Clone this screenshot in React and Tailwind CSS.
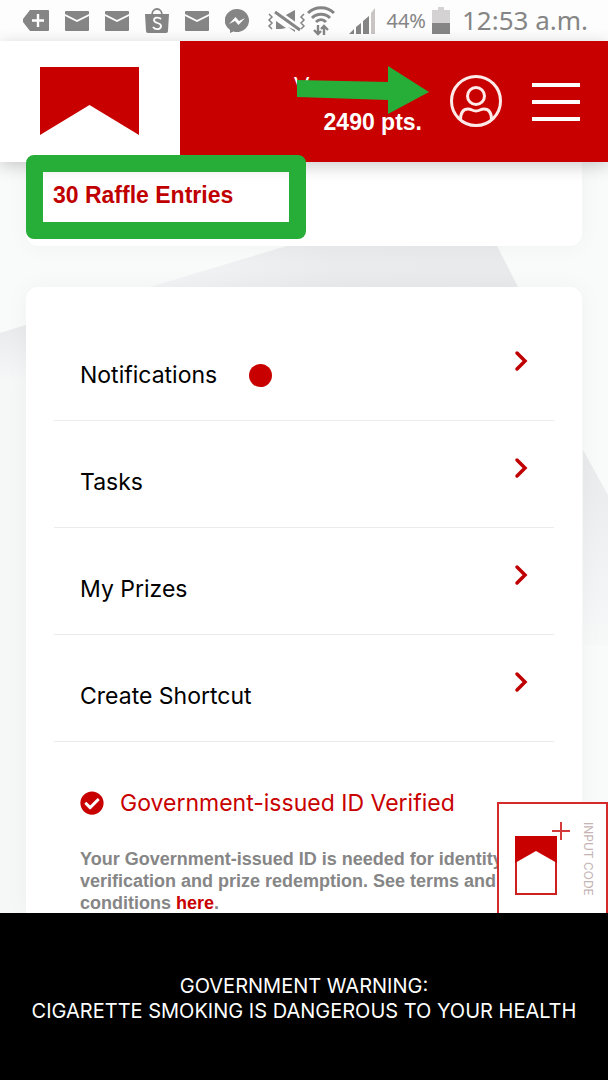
import { FaCheckCircle } from "react-icons/fa";

const MENU_ITEMS = [
  { label: "Notifications", unread: true },
  { label: "Tasks" },
  { label: "My Prizes" },
  { label: "Create Shortcut" },
];

function MailIcon() {
  return (
    <svg viewBox="0 0 24 20" className="h-5 w-6">
      <path d="M1 0h22q1 0 1 1v2L12 9 0 3V1q0-1 1-1z" fill="#858585" />
      <path d="M0 5l12 6 12-6v14q0 1-1 1H1q-1 0-1-1z" fill="#858585" />
    </svg>
  );
}

function StatusBar() {
  return (
    <div className="flex h-[41px] shrink-0 items-center justify-between bg-[#fdfdfd] pl-[23px] pr-5 text-[#858585]">
      <div className="flex items-center gap-4">
        <svg viewBox="0 0 26 21" className="h-[21px] w-[26px]">
          <path d="M7 0h18q1 0 1 1v19q0 1-1 1H7L0 12v-3z" fill="#858585" />
          <path d="M15 4v13M9 10.500h12" stroke="#fff" strokeWidth="2.400" />
        </svg>
        <MailIcon />
        <MailIcon />
        <svg viewBox="0 0 24 26" className="h-[26px] w-6">
          <path d="M7 7C7-1 17-1 17 7" fill="none" stroke="#858585" strokeWidth="1.800" />
          <path d="M0 6h24l-1 17q0 2-2 2H3q-2 0-2-2z" fill="#858585" />
          <path
            d="M16 11c-2-2-7-2-7 1 0 4 7 2 7 6 0 4-6 4-8 1"
            fill="none"
            stroke="#fff"
            strokeWidth="1.800"
          />
        </svg>
        <MailIcon />
        <svg viewBox="0 0 24 24" className="h-6 w-6">
          <path d="M12 0a12 11.500 0 1 1-3.500 22.500L5 24v-3A12 11.500 0 0 1 12 0z" fill="#858585" />
          <path d="M4 15l6.500-7 3.500 4 6-3-6.500 7-3.500-4z" fill="#fff" />
        </svg>
      </div>
      <div className="flex items-center">
        <svg viewBox="0 0 40 26" className="h-[26px] w-10" fill="none" stroke="#858585">
          <path d="M2 6l3 3-3 3 3 3-3 3 3 3M37 6l-3 3 3 3-3 3 3 3-3 3" strokeWidth="1.500" />
          <path d="M9 10v11h5l5-1L9 13zM17 8l11-6v14zM21 19l7 5v-2z" fill="#858585" stroke="none" />
          <path d="M8 3l25 18" stroke="#fdfdfd" strokeWidth="6" />
          <path d="M8 4l25 18" strokeWidth="3" />
        </svg>
        <svg viewBox="0 0 28 30" className="h-[30px] w-7" fill="none" stroke="#858585" strokeWidth="3">
          <path d="M1 7c7-7 19-7 26 0M5 12c5-5 13-5 18 0M9 16c3-3 7-3 10 0" />
          <path d="M11 19v9M7 24l4 4 3-3M17 29v-9M14 23l3-3 4 4" strokeWidth="2.400" />
        </svg>
        <svg viewBox="0 0 27 26" className="ml-3.5 h-[26px] w-[27px]" fill="#858585">
          <path d="M0 26l5-5v5zM7 19l5-4v11H7zM14 13l6-5v18h-6z" />
          <path d="M22 5l4-5v26h-4z" fill="#c9c5c5" />
        </svg>
        <span className="ml-2.5 font-['Noto_Sans'] text-xl">44%</span>
        <svg viewBox="0 0 18 27" className="ml-1.5 h-[27px] w-[18px]">
          <path d="M6 0h6v3h6v14H0V3h6z" fill="#d4d2d2" />
          <path d="M0 16h18v11H0z" fill="#858585" />
        </svg>
        <span className="ml-3 font-['Noto_Sans'] text-[26px]">12:53 a.m.</span>
      </div>
    </div>
  );
}

function Header() {
  return (
    <header className="relative z-10 flex h-[121px] shrink-0 bg-[#c80000] text-white shadow-[0_4px_16px_rgba(0,0,0,0.2)]">
      <a href="#home" aria-label="Home" className="w-[180px] bg-white pl-10 pt-[26px]">
        <svg viewBox="0 0 99 68" className="h-[68px] w-[99px]">
          <path d="M0 0h99v68L49.500 38 0 68z" fill="#c80000" />
        </svg>
      </a>
      <div className="relative flex flex-1 items-center justify-end pr-7">
        <div className="w-32 pt-1 font-['Liberation_Sans',sans-serif] text-[23px] font-bold leading-9">
          <p className="font-normal">V</p>
          <p className="text-right">2490 pts.</p>
        </div>
        <button type="button" aria-label="Account" className="ml-7">
          <svg viewBox="0 0 54 54" className="h-[54px] w-[54px]" fill="none" stroke="#ffeaea" strokeWidth="3">
            <circle cx="26" cy="26" r="24.500" />
            <circle cx="26" cy="21" r="8.500" />
            <path d="M10.500 45C10.500 37 13 34 18 34C22 34 22 36 26 36C30 36 30 34 34 34C39 34 41.500 37 41.500 45" />
          </svg>
        </button>
        <button type="button" aria-label="Menu" className="ml-7 flex w-12 flex-col gap-[13px]">
          <span className="h-1 bg-white" />
          <span className="h-1 bg-white" />
          <span className="h-1 bg-white" />
        </button>
        <svg
          viewBox="0 0 132 48"
          className="absolute right-[179px] top-[25px] h-12 w-[132px]"
          fill="#27ae38"
        >
          <path d="M0 14l91 2V0l41 26-41 22V34L0 31z" />
        </svg>
      </div>
    </header>
  );
}

function Backdrop() {
  return (
    <svg
      viewBox="0 0 608 751"
      preserveAspectRatio="none"
      className="absolute inset-0 h-full w-full"
    >
      <defs>
        <linearGradient id="fade" x1="0" y1="0" x2="0" y2="1">
          <stop offset="0" stopColor="#e9eaec" />
          <stop offset="1" stopColor="#f7f8f8" />
        </linearGradient>
        <linearGradient id="band" x1="0" y1="0" x2="1" y2="0">
          <stop offset="0" stopColor="#f3f4f5" />
          <stop offset="0.500" stopColor="#eaebec" />
          <stop offset="1" stopColor="#e9eaeb" />
        </linearGradient>
      </defs>
      <path d="M0 0h608v751H0z" fill="#f9fafa" />
      <path d="M0 171L150 125 300 80V751H0z" fill="#f6f7f7" />
      <path d="M0 171l26-8v60H0z" fill="url(#fade)" />
      <path d="M150 125L300 80h195l23 45z" fill="url(#band)" />
      <path d="M583 288l25 45v150h-25z" fill="url(#fade)" />
    </svg>
  );
}

function MenuRow({ label, unread }) {
  return (
    <li className="border-b border-[#ececec]">
      <a href="#menu" className="flex h-[106px] justify-between px-[26px]">
        <span className="flex h-[122px] items-center gap-8">
          {label}
          {unread && <span className="h-[23px] w-[23px] rounded-full bg-[#c80000]" />}
        </span>
        <svg
          viewBox="0 0 14 22"
          className="mt-9 h-[22px] w-3.5"
          fill="none"
          stroke="#c00000"
          strokeWidth="3.500"
          strokeLinecap="round"
        >
          <path d="M3 3l8 8-8 8" />
        </svg>
      </a>
    </li>
  );
}

function InputCodeButton() {
  return (
    <button
      type="button"
      className="absolute bottom-0 right-0 flex h-[111px] w-[111px] items-center justify-between border-2 border-b-0 border-[#d42a2a] bg-white pl-4 pr-2.5"
    >
      <svg viewBox="0 0 58 74" className="h-[74px] w-[58px]">
        <path d="M1 15h40v57H1z" fill="#fff" stroke="#cf2020" strokeWidth="2" />
        <path d="M0 14h42v27L21 29 0 41z" fill="#c80000" />
        <path d="M46 0v18M37 9h18" stroke="#d43a3a" strokeWidth="2" />
      </svg>
      <span className="text-xs leading-4 text-[#c4b4b4] [writing-mode:vertical-rl]">
        INPUT CODE
      </span>
    </button>
  );
}

export default function App() {
  return (
    <div className="flex h-screen flex-col overflow-hidden bg-white font-['Inter',sans-serif]">
      <StatusBar />
      <Header />
      <main className="relative min-h-0 flex-1">
        <Backdrop />
        <div className="relative flex h-full flex-col gap-[41px] overflow-hidden px-[26px]">
          <section className="h-[84px] shrink-0 rounded-b-xl bg-white pl-[27px] pt-[17px] shadow-[0_0_24px_rgba(0,0,0,0.04)]">
            <h2 className="font-['Liberation_Sans',sans-serif] text-[23px] font-bold leading-8 text-[#c00000]">
              30 Raffle Entries
            </h2>
          </section>
          <section className="shrink-0 rounded-t-xl bg-white px-7 pt-[27px] shadow-[0_0_24px_rgba(0,0,0,0.04)]">
            <ul className="text-[23px] text-black">
              {MENU_ITEMS.map((item) => (
                <MenuRow key={item.label} {...item} />
              ))}
            </ul>
            <div className="px-[26px] pt-[45px]">
              <p className="flex items-center gap-4 text-[23px] leading-8 text-[#c80000]">
                <FaCheckCircle className="h-6 w-6" />
                Government-issued ID Verified
              </p>
              <p className="mt-[29px] whitespace-nowrap font-['Liberation_Sans',sans-serif] text-lg font-bold leading-[22px] text-[#868686]">
                Your Government-issued ID is needed for identity
                <br />
                verification and prize redemption. See terms and
                <br />
                conditions{" "}
                <a href="#terms" className="text-[#c80000]">
                  here
                </a>
                .
              </p>
            </div>
          </section>
        </div>
        <div className="absolute -top-[7px] left-[26px] z-20 h-[84px] w-[280px] rounded-lg border-[17px] border-[#27ae38]" />
        <InputCodeButton />
      </main>
      <footer className="h-[167px] shrink-0 bg-black pt-[61px] text-center text-xl leading-[25px] text-white">
        GOVERNMENT WARNING:
        <br />
        CIGARETTE SMOKING IS DANGEROUS TO YOUR HEALTH
      </footer>
    </div>
  );
}
